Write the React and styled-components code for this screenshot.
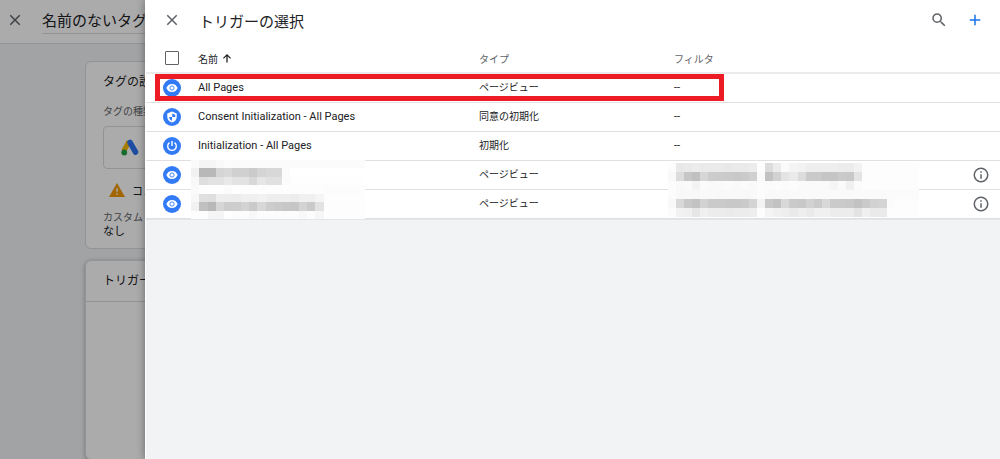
import React from 'react'
import styled, { createGlobalStyle } from 'styled-components'


const triggers = [
  { name: 'All Pages', type: 'ページビュー', filter: '--', icon: 'eye', marked: true },
  { name: 'Consent Initialization - All Pages', type: '同意の初期化', filter: '--', icon: 'shield' },
  { name: 'Initialization - All Pages', type: '初期化', filter: '--', icon: 'power' },
  { name: '', type: 'ページビュー', filter: '', icon: 'eye', info: true },
  { name: '', type: 'ページビュー', filter: '', icon: 'eye', info: true },
]

// grey levels of the hidden names and filters, one pair of hex digits per block
const hiddenNames = [
  'faf5f5f9fcfbfbfbfbfbfbfbfbfbfbfbfbfbfbfbfb',
  'f1b8b8d5d8d0d0cbd4d8d8fbffffffffffffffffff',
  'f8dee2e2e8e3e3d8e6e0e0fbfefefefefefefefefe',
  'fafefefefbfefdfdfdfdfdfdfdfdfdfdfcfcfcfcfc',
  'f8e0deeeeeecf0eff2eeeeeeecf0f0f5fdfdfdfdfd',
  'f1c0b8d6cdcdd3cad8cdcac7c6d3cae2fdfdfdfdfd',
  'fdfdf5f5fefcfcf8fcfcfcfcfcf8fcf6fefdfdfdfd',
]
const hiddenFilters = [
  'fce8eaeceaeaeae8eaeaecfddcecfaf4f2eeeeeeeeececf2fdfdfdfdfdfdfd',
  'f8dcc6c0d6cccbcac8cad0fac2d2e4eadccacac5c5cac8e4fdfdfdfdfdfdfd',
  'fcf9faf3fbf9fafbf9fbf9fcfbfcfbfcfafafaf9f5faf0fbfdfdfdfdfdfdfd',
  'fcf8f8f8f9f9f8f9f9f8f9fcf9f9f9fafafafafafafafafafafafafbfbfbfb',
  'f8d8c8c2d2cacac8c8cad4f3c8c2d8cac8d2cad8cacac8c2cad2d4fbfdfdfd',
  'fcf2f0e6f0ececeaececeefdf4f0eeeaeeeaf0f0ececece3f0eaeafdfdfdfd',
]

const Mosaic = ({ rows, ...rest }) => (
  <MosaicSvg
    viewBox={`0 0 ${rows[0].length / 2} ${rows.length}`}
    preserveAspectRatio="none"
    shapeRendering="crispEdges"
    aria-hidden="true"
    {...rest}
  >
    {rows.map((row, y) => row.match(/../g).map((grey, x) => (
      <rect key={`${x}-${y}`} x={x} y={y} width="1" height="1" fill={`#${grey}${grey}${grey}`} />
    )))}
  </MosaicSvg>
)

const CloseIcon = () => (
  <svg width="18" height="18" viewBox="0 0 24 24" fill="currentColor">
    <path d="M19 6.410 17.590 5 12 10.590 6.410 5 5 6.410 10.590 12 5 17.590 6.410 19 12 13.410 17.590 19 19 17.590 13.410 12z" />
  </svg>
)

const SearchIcon = () => (
  <svg width="18" height="18" viewBox="0 0 24 24" fill="currentColor">
    <path d="M15.5 14h-.79l-.28-.27A6.47 6.47 0 0 0 16 9.5 6.5 6.5 0 1 0 9.5 16c1.61 0 3.09-.59 4.23-1.57l.27.28v.79l5 4.99L20.49 19l-4.99-5zm-6 0C7.01 14 5 11.99 5 9.5S7.01 5 9.5 5 14 7.01 14 9.5 11.99 14 9.5 14z" />
  </svg>
)

const PlusIcon = () => (
  <svg width="18" height="18" viewBox="0 0 24 24" fill="currentColor">
    <path d="M19 13h-6v6h-2v-6H5v-2h6V5h2v6h6z" />
  </svg>
)

const ArrowUpIcon = () => (
  <svg width="12" height="12" viewBox="0 0 24 24" fill="currentColor">
    <path d="M4 12l1.7 1.7 5-5V21h2.600V8.700l5 5L20 12l-8-8z" />
  </svg>
)

const InfoIcon = () => (
  <svg width="18" height="18" viewBox="0 0 24 24" fill="currentColor">
    <path d="M11 7h2v2h-2zm0 4h2v6h-2zm1-9a10 10 0 1 0 0 20 10 10 0 0 0 0-20zm0 18a8 8 0 1 1 0-16 8 8 0 0 1 0 16z" />
  </svg>
)

const TriggerIcon = ({ kind }) => (
  <IconSvg width="18" height="18" viewBox="0 0 36 36">
    <circle cx="18" cy="18" r="18" fill="#337af5" />
    {kind === 'eye' && (
      <>
        <path d="M18 10c-5.200 0-9.600 3.300-11.300 8 1.700 4.700 6.100 8 11.300 8s9.600-3.300 11.300-8c-1.700-4.700-6.100-8-11.300-8z" fill="#fff" />
        <circle cx="18" cy="18" r="4.200" fill="none" stroke="#337af5" strokeWidth="1.800" />
      </>
    )}
    {kind === 'shield' && (
      <>
        <path d="M18 7l-9.500 4v6.500c0 5.600 4 10.200 9.500 11.500 5.500-1.300 9.500-5.900 9.500-11.500V11z" fill="#fff" />
        <path d="M18.500 11v7h6v-4.500z" fill="#337af5" />
        <path d="M18 18h-6c.6 3.600 2.800 6.600 6 7.700z" fill="#337af5" />
      </>
    )}
    {kind === 'power' && (
      <path d="M13 11.200a8.600 8.600 0 1 0 10 0M18 8v10" fill="none" stroke="#fff" strokeWidth="2.800" />
    )}
  </IconSvg>
)

const AdsLogo = () => (
  <svg width="18" height="17" viewBox="0 0 36 34">
    <path d="M16 5L5.500 24" stroke="#fbbc04" strokeWidth="10" />
    <path d="M18 7l11 19" stroke="#2f73f0" strokeWidth="11" strokeLinecap="round" />
    <circle cx="6.500" cy="27" r="5.800" fill="#23a047" />
  </svg>
)

const WarningIcon = () => (
  <svg width="16" height="14" viewBox="0 0 22 19">
    <path d="M0 19h22L11 0z" fill="#f29900" />
    <path d="M10 7h2v5h-2zM10 14h2v2h-2z" fill="#fff" />
  </svg>
)


const App = () => (
  <>
    <GlobalStyle />
    <Page>
      <TagHeader>
        <IconButton aria-label="閉じる"><CloseIcon /></IconButton>
        <TagName type="text" defaultValue="名前のないタグ" aria-label="タグの名前" />
      </TagHeader>
      <TagBody>
        <Card>
          <CardTitle>タグの設定</CardTitle>
          <CardContent>
            <Label>タグの種類</Label>
            <TagType><AdsLogo /></TagType>
            <Warning><WarningIcon />コンバージョン</Warning>
            <Label>カスタム パラメータ</Label>
            <Value>なし</Value>
          </CardContent>
        </Card>
        <Card $raised>
          <CardTitle $lined>トリガー</CardTitle>
        </Card>
      </TagBody>
      <Scrim />
    </Page>
    <Panel>
      <PanelHeader>
        <IconButton aria-label="閉じる"><CloseIcon /></IconButton>
        <PanelTitle>トリガーの選択</PanelTitle>
        <IconButton aria-label="検索"><SearchIcon /></IconButton>
        <IconButton $blue aria-label="追加"><PlusIcon /></IconButton>
      </PanelHeader>
      <TableWrapper>
        <Table>
          <colgroup>
            <Col $w={52} />
            <Col $w={281} />
            <Col $w={195} />
            <col />
            <Col $w={38} />
          </colgroup>
          <thead>
            <tr>
              <HeadCell $center><Checkbox type="checkbox" aria-label="すべて選択" /></HeadCell>
              <HeadCell $sorted><SortLabel>名前<ArrowUpIcon /></SortLabel></HeadCell>
              <HeadCell>タイプ</HeadCell>
              <HeadCell>フィルタ</HeadCell>
              <HeadCell />
            </tr>
          </thead>
          <tbody>
            {triggers.map((trigger, i) => (
              <tr key={i}>
                <Cell $center>
                  <TriggerIcon kind={trigger.icon} />
                  {trigger.marked && <Marker />}
                </Cell>
                <Cell>{trigger.name}</Cell>
                <Cell $small>{trigger.type}</Cell>
                <Cell>{trigger.filter}</Cell>
                <Cell $center>
                  {trigger.info && <IconButton aria-label="詳細"><InfoIcon /></IconButton>}
                </Cell>
              </tr>
            ))}
          </tbody>
        </Table>
        <NameMosaic rows={hiddenNames} />
        <FilterMosaic rows={hiddenFilters} />
      </TableWrapper>
    </Panel>
  </>
)

const GlobalStyle = createGlobalStyle`
  * {
    box-sizing: border-box;
  }
  body {
    margin: 0;
    font-family: Roboto, "Noto Sans CJK JP", sans-serif;
    color: #202124;
    background: #f1f3f4;
  }
`
const Page = styled.div`
  position: relative;
  display: flex;
  flex-direction: column;
  height: 100vh;
  overflow: hidden;
  background: #f1f3f6;
`
const TagHeader = styled.header`
  display: flex;
  align-items: center;
  gap: 18px;
  height: 44px;
  flex-shrink: 0;
  padding: 0 6px 4px;
  background: #fff;
  border-bottom: 1px solid #dadce0;
`
const TagName = styled.input`
  width: 300px;
  height: 28px;
  padding: 0;
  border: none;
  border-bottom: 1px solid #dadce0;
  background: none;
  font-family: inherit;
  font-size: 15px;
  color: inherit;
`
const TagBody = styled.main`
  display: flex;
  flex-direction: column;
  flex: 1;
  gap: 11px;
  padding: 17px 85px 0;
`
const Card = styled.section`
  flex: ${props => props.$raised ? "1 0 200px" : "0 0 auto"};
  border: 1px solid #dadce0;
  border-radius: 6px;
  background: #fff;
  box-shadow: ${props => props.$raised ? "0 1px 4px rgba(0, 0, 0, 0.3)" : "none"};
`
const CardTitle = styled.h2`
  margin: 0;
  padding: 0 17px;
  font-size: 12px;
  font-weight: 400;
  line-height: 40px;
  border-bottom: ${props => props.$lined ? "1px solid #dadce0" : "none"};
`
const CardContent = styled.div`
  padding: 2px 17px 10px;
`
const Label = styled.div`
  font-size: 10px;
  line-height: 16px;
  color: #5f6368;
`
const Value = styled.div`
  font-size: 11px;
  line-height: 12px;
`
const TagType = styled.div`
  display: flex;
  align-items: center;
  height: 43px;
  margin-top: 6px;
  padding-left: 17px;
  border: 1px solid #dadce0;
  border-radius: 4px;
`
const Warning = styled.div`
  display: flex;
  align-items: center;
  gap: 7px;
  height: 41px;
  padding-left: 6px;
  font-size: 11px;
`
const Scrim = styled.div`
  position: absolute;
  inset: 0;
  background: rgba(0, 0, 0, 0.33);
`
const Panel = styled.aside`
  position: absolute;
  top: 0;
  right: 0;
  bottom: 0;
  left: 145px;
  border-left: 1px solid #fff;
  background: #f1f3f4;
  box-shadow: 0 0 8px rgba(0, 0, 0, 0.4);
`
const PanelHeader = styled.header`
  display: flex;
  align-items: center;
  gap: 18px;
  height: 44px;
  padding: 0 16px 4px 17px;
  background: #fff;
`
const PanelTitle = styled.h1`
  flex: 1;
  margin: 0;
  font-size: 15px;
  font-weight: 400;
`
const IconButton = styled.button`
  display: inline-flex;
  padding: 0;
  border: none;
  background: none;
  vertical-align: middle;
  color: ${props => props.$blue ? "#1a73e8" : "#5f6368"};
`
const TableWrapper = styled.div`
  position: relative;
`
const Table = styled.table`
  width: 100%;
  table-layout: fixed;
  border-collapse: separate;
  border-spacing: 0;
  border-bottom: 1px solid #e4e5e8;
  background: #fff;
`
const Col = styled.col`
  width: ${props => props.$w}px;
`
const HeadCell = styled.th`
  height: 30px;
  padding: 0;
  border-bottom: 2px solid #ebebeb;
  font-size: 10px;
  font-weight: 400;
  text-align: ${props => props.$center ? "center" : "left"};
  color: ${props => props.$sorted ? "#202124" : "#5f6368"};
`
const SortLabel = styled.span`
  display: flex;
  align-items: center;
  gap: 3px;
`
const Cell = styled.td`
  position: relative;
  height: 29px;
  padding: 0;
  border-bottom: 1px solid #e0e0e0;
  font-size: ${props => props.$small ? "10px" : "11px"};
  line-height: 16px;
  text-align: ${props => props.$center ? "center" : "left"};
`
const Checkbox = styled.input`
  appearance: none;
  display: block;
  width: 14px;
  height: 14px;
  margin: 0 auto;
  border: 1px solid #5f6368;
  border-radius: 1px;
`
const IconSvg = styled.svg`
  display: block;
  margin: 0 auto;
`
const Marker = styled.div`
  position: absolute;
  z-index: 1;
  top: 0;
  left: 9px;
  width: 569px;
  height: 27px;
  border: 5px solid #ed1c24;
`
const MosaicSvg = styled.svg`
  position: absolute;
`
const NameMosaic = styled(Mosaic)`
  top: 116px;
  left: 45px;
  width: 174px;
  height: 59px;
`
const FilterMosaic = styled(Mosaic)`
  top: 119px;
  left: 522px;
  width: 251px;
  height: 54px;
`


export default App;
